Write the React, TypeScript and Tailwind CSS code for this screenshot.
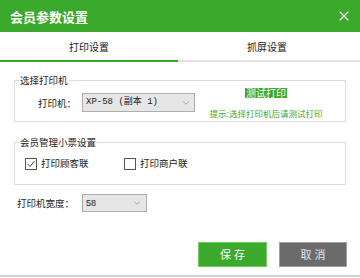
import { X, ChevronDown } from "lucide-react"

const cjk = { fontFamily: '"Noto Sans CJK SC", "Noto Sans", sans-serif' }

const Check = ({ checked }: { checked?: boolean }) => (
    <svg width="12" height="12" viewBox="0 0 12 12" className="shrink-0">
        <rect x="0.5" y="0.5" width="11" height="11" fill="#fff" stroke="#555" />
        {checked && <polyline points="2.5,6 5,8.5 9.5,3" fill="none" stroke="#444" strokeWidth="1" />}
    </svg>
)

export default function App() {
    return (
        <div className="w-[360px] h-[278px] bg-white flex flex-col text-[#222]" style={cjk}>
            {/* title */}
            <div className="h-[32px] bg-[#3ba92b] flex items-center justify-between pl-[10px] pr-[8px] shrink-0">
                <span className="text-[13px] font-bold text-white leading-none">会员参数设置</span>
                <X size={16} strokeWidth={1.6} color="#fff" />
            </div>

            {/* tabs */}
            <div className="flex h-[30px] shrink-0">
                <div className="flex-1 flex items-center justify-center text-[10px] border-b-2 border-[#3ba92b]">打印设置</div>
                <div className="flex-1 flex items-center justify-center text-[10px] border-b-2 border-[#e2e2e2] pr-[4px]">抓屏设置</div>
            </div>

            <div className="px-[14px] pt-[14px] flex flex-col">
                <fieldset className="border border-[#dedede] h-[46px]">
                    <legend className="ml-[5px] text-[9.5px] leading-none">选择打印机</legend>
                    <div className="flex items-center w-full pl-[23px] pr-[14px] mt-[3px]">
                        <span className="text-[9.5px] w-[44px]">打印机：</span>
                        <div className="w-[113px] h-[19px] bg-[#e6e6e6] border border-[#adadad] flex items-center justify-between pl-[3px] pr-[3px]">
                            <span className="text-[9px] leading-none" style={{ fontFamily: '"Liberation Mono", "Noto Sans CJK SC", monospace' }}>XP-58 (副本 1)</span>
                            <ChevronDown size={10} strokeWidth={1.3} color="#777" />
                        </div>
                        <div className="ml-auto w-[130px] flex flex-col items-center gap-[11px] -mt-[1px]">
                            <span className="bg-[#3ba92b] text-white text-[10px] leading-[10px] px-[1px]">测试打印</span>
                            <span className="text-[#3ba92b] text-[8.5px] leading-none whitespace-nowrap">提示:选择打印机后请测试打印</span>
                        </div>
                    </div>
                </fieldset>

                <fieldset className="border border-[#dedede] h-[47px] mt-[16px]">
                    <legend className="ml-[5px] text-[9.5px] leading-none">会员管理小票设置</legend>
                    <div className="flex items-center pl-[10px] mt-[10px]">
                        <div className="flex items-center gap-[4px] w-[99px]">
                            <Check checked />
                            <span className="text-[9.5px] leading-none">打印顾客联</span>
                        </div>
                        <div className="flex items-center gap-[4px]">
                            <Check />
                            <span className="text-[9.5px] leading-none">打印商户联</span>
                        </div>
                    </div>
                </fieldset>

                <div className="flex items-center mt-[9px] pl-[3px]">
                    <span className="text-[9.5px] w-[65px]">打印机宽度：</span>
                    <div className="w-[65px] h-[18px] bg-[#e6e6e6] border border-[#adadad] flex items-center justify-between pl-[3px] pr-[4px]">
                        <span className="text-[9px] leading-none" style={{ fontFamily: '"Liberation Sans", sans-serif' }}>58</span>
                        <ChevronDown size={10} strokeWidth={1.3} color="#777" />
                    </div>
                </div>
            </div>

            <div className="flex justify-end gap-[12px] pr-[13px] mt-auto mb-[8px]">
                <button className="w-[69px] h-[25px] bg-[#3ba92b] border border-[#6fce5e] text-white text-[11px] tracking-[3px] pl-[3px]">保存</button>
                <button className="w-[68px] h-[25px] bg-[#6b6b6b] border border-[#a0a0a0] text-[#e6e6e6] text-[11px] tracking-[3px] pl-[3px]">取消</button>
            </div>
            <div className="h-[2px] bg-[#cfcfcf] shrink-0 mb-[1px]" />
        </div>
    )
}
